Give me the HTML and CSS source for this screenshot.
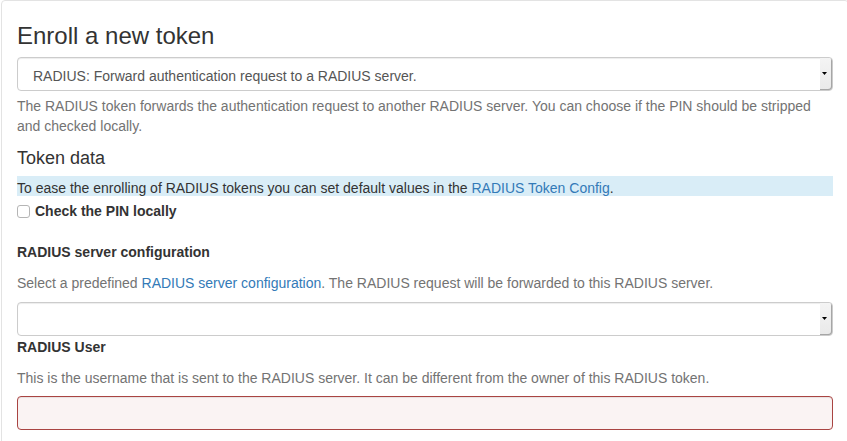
FILE: index.html
```html
<!DOCTYPE html>
<html>
<head>
<meta charset="utf-8">
<title>Enroll a new token</title>
<link rel="stylesheet" href="styles.css">
</head>
<body>
<div class="panel">
  <h3 class="title">Enroll a new token</h3>
  <div class="select">
    <span class="select-value">RADIUS: Forward authentication request to a RADIUS server.</span>
    <span class="select-btn"><svg width="5" height="3" viewBox="0 0 5 3"><polygon points="0,0 5,0 2.5,3" fill="#000"/></svg></span>
  </div>
  <p class="help help-first">The RADIUS token forwards the authentication request to another RADIUS server. You can choose if the PIN should be stripped and checked locally.</p>
  <h4 class="subtitle">Token data</h4>
  <div class="info">To ease the enrolling of RADIUS tokens you can set default values in the <a href="#">RADIUS Token Config</a>.</div>
  <div class="check-row">
    <input type="checkbox" class="check">
    <label class="check-label">Check the PIN locally</label>
  </div>
  <label class="field-label label-server">RADIUS server configuration</label>
  <p class="help help-server">Select a predefined <a href="#">RADIUS server configuration</a>. The RADIUS request will be forwarded to this RADIUS server.</p>
  <div class="select select-server">
    <span class="select-value"></span>
    <span class="select-btn"><svg width="5" height="3" viewBox="0 0 5 3"><polygon points="0,0 5,0 2.5,3" fill="#000"/></svg></span>
  </div>
  <label class="field-label label-user">RADIUS User</label>
  <p class="help help-user">This is the username that is sent to the RADIUS server. It can be different from the owner of this RADIUS token.</p>
  <div class="input-error"></div>
</div>
</body>
</html>
```
FILE: styles.css
```css
html, body {
  margin: 0;
  padding: 0;
  background: #fff;
  overflow: hidden;
}
body {
  font-family: "Liberation Sans", Arial, sans-serif;
  font-size: 14px;
  line-height: 20px;
  color: #333;
}
a {
  color: #337ab7;
  text-decoration: none;
}
.panel {
  margin-left: 1px;
  width: 848px;
  box-sizing: border-box;
  min-height: 460px;
  border: 1px solid #e3e3e3;
  border-radius: 4px 4px 0 0;
  padding: 22px 15px 20px;
}
.title {
  margin: 0 0 8px;
  font-size: 24px;
  line-height: 26px;
  font-weight: normal;
  color: #333;
}
.select {
  display: flex;
  height: 34px;
  box-sizing: border-box;
  border: 1px solid #ccc;
  border-radius: 4px;
  color: #555;
  background: #fff;
  box-shadow: inset 0 1px 1px rgba(0,0,0,.075);
}
.select-value {
  flex: 1;
  padding: 8px 15px 0;
  line-height: 21px;
  white-space: nowrap;
  overflow: hidden;
}
.select-btn {
  width: 12px;
  display: flex;
  align-items: center;
  padding-left: 2px;
  box-sizing: border-box;
  background: linear-gradient(#f4f4f4, #e9e9e9);
  border-radius: 0 3px 3px 0;
  box-shadow: inset -1px -1px 0 #a6a6a6;
}
.select-btn svg {
  display: block;
  margin-top: -1px;
}
.help {
  margin: 5px 0 0;
  color: #737373;
}
.subtitle {
  margin: 12px 0 8px;
  font-size: 18px;
  line-height: 20px;
  font-weight: normal;
  color: #333;
}
.info {
  height: 20px;
  line-height: 24px;
  background: #d9edf7;
  color: #333;
  white-space: nowrap;
}
.check-row {
  display: flex;
  align-items: center;
  margin-top: 5px;
  height: 20px;
}
.check {
  appearance: none;
  -webkit-appearance: none;
  margin: 0 5px 0 0;
  width: 13px;
  height: 13px;
  box-sizing: border-box;
  border: 1px solid #b5b5b5;
  border-radius: 3px;
  background: #fff;
}
.check-label {
  font-weight: bold;
  color: #333;
}
.field-label {
  display: block;
  font-weight: bold;
  color: #333;
}
.label-server {
  margin-top: 21px;
}
.help-server {
  margin-top: 11px;
}
.select-server {
  margin-top: 9px;
}
.label-user {
  margin-top: 1px;
}
.help-user {
  margin-top: 11px;
}
.input-error {
  margin-top: 8px;
  height: 34px;
  box-sizing: border-box;
  border: 1px solid #a94442;
  border-radius: 4px;
  background: #faf3f3;
  box-shadow: inset 0 1px 1px rgba(0,0,0,.075);
}
```
